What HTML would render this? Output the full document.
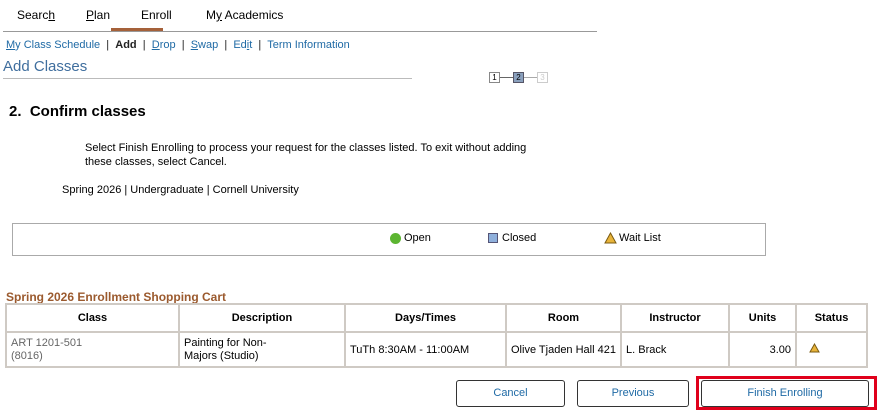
<!DOCTYPE html>
<html><head><style>
*{margin:0;padding:0;box-sizing:border-box}
body{width:877px;height:410px;background:#fff;font-family:"Liberation Sans",Arial,sans-serif;position:relative;overflow:hidden;color:#000}
.a{position:absolute;white-space:nowrap}
.tab{font-size:12px;top:8px}
.sub{font-size:11px;top:39px;color:#1f6aa5}
.sub span{color:#222}
table{border-collapse:collapse;position:absolute;left:5px;top:303px;width:863px;font-size:11px}
td,th{border:2px solid #cfcac4;padding:0 4px}
th{height:28px;font-weight:bold}
td{height:35px}
.btn{position:absolute;top:380px;height:27px;border:1px solid #333;border-radius:3px;font-size:11px;color:#1f6aa5;text-align:center;line-height:25px;background:#fff}
.box{position:absolute;top:72px;width:11px;height:11px;border:1px solid #888;font-size:8px;text-align:center;line-height:9px}
</style></head><body>
<div class="a tab" style="left:17px">Searc<u>h</u></div>
<div class="a tab" style="left:86px"><u>P</u>lan</div>
<div class="a tab" style="left:141px">Enroll</div>
<div class="a tab" style="left:206px">M<u>y</u> Academics</div>
<div class="a" style="left:111px;top:28px;width:52px;height:3px;background:#a5613a"></div>
<div class="a" style="left:3px;top:31px;width:594px;height:1px;background:#999"></div>
<div class="a sub" style="left:6px"><u>M</u>y Class Schedule <span>&nbsp;|&nbsp; <b>Add</b> &nbsp;|&nbsp;</span> <u>D</u>rop <span>&nbsp;|&nbsp;</span> <u>S</u>wap <span>&nbsp;|&nbsp;</span> Ed<u>i</u>t <span>&nbsp;|&nbsp;</span> Term Information</div>
<div class="a" style="left:3px;top:58px;font-size:15px;color:#3f6e9e">Add Classes</div>
<div class="a" style="left:3px;top:78px;width:409px;height:1px;background:#bbb"></div>
<div class="box" style="left:489px">1</div>
<div class="a" style="left:500px;top:77px;width:13px;height:1px;background:#666"></div>
<div class="box" style="left:513px;background:#8aa0bd;border-color:#556">2</div>
<div class="a" style="left:524px;top:77px;width:13px;height:1px;background:#aaa"></div>
<div class="box" style="left:537px;border-color:#ccc;color:#ccc">3</div>
<div class="a" style="left:9px;top:103px;font-size:15px;font-weight:bold">2.&nbsp; Confirm classes</div>
<div class="a" style="left:85px;top:141px;font-size:11px;line-height:14px">Select Finish Enrolling to process your request for the classes listed. To exit without adding<br>these classes, select Cancel.</div>
<div class="a" style="left:62px;top:184px;font-size:11px">Spring 2026 | Undergraduate | Cornell University</div>
<div class="a" style="left:12px;top:223px;width:754px;height:33px;border:1px solid #aaa"></div>
<div class="a" style="left:390px;top:233px;width:11px;height:11px;border-radius:50%;background:#5cb531"></div>
<div class="a" style="left:404px;top:232px;font-size:11px">Open</div>
<div class="a" style="left:488px;top:233px;width:10px;height:10px;background:#8fb0dc;border:1px solid #557"></div>
<div class="a" style="left:502px;top:232px;font-size:11px">Closed</div>
<svg class="a" style="left:604px;top:232px" width="13" height="12"><polygon points="6.5,1 12,11 1,11" fill="#e8b43a" stroke="#7a5a10"/></svg>
<div class="a" style="left:619px;top:232px;font-size:11px">Wait List</div>
<div class="a" style="left:6px;top:290px;font-size:12px;font-weight:bold;color:#9b5a2e">Spring 2026 Enrollment Shopping Cart</div>
<table>
<tr><th style="width:173px">Class</th><th style="width:166px">Description</th><th style="width:161px">Days/Times</th><th style="width:115px">Room</th><th style="width:108px">Instructor</th><th style="width:67px">Units</th><th>Status</th></tr>
<tr><td style="color:#666;line-height:13px">ART 1201-501<br>(8016)</td><td style="line-height:13px">Painting for Non-<br>Majors (Studio)</td><td>TuTh 8:30AM - 11:00AM</td><td>Olive Tjaden Hall 421</td><td>L. Brack</td><td style="text-align:right">3.00</td><td style="padding-left:12px"><svg width="11" height="10"><polygon points="5.5,1 10,9 1,9" fill="#e8b43a" stroke="#7a5a10"/></svg></td></tr>
</table>
<div class="btn" style="left:456px;width:109px">Cancel</div>
<div class="btn" style="left:577px;width:112px">Previous</div>
<div class="a" style="left:696px;top:376px;width:181px;height:34px;border:3px solid #e0001b"></div>
<div class="btn" style="left:701px;width:168px">Finish Enrolling</div>
</body></html>
